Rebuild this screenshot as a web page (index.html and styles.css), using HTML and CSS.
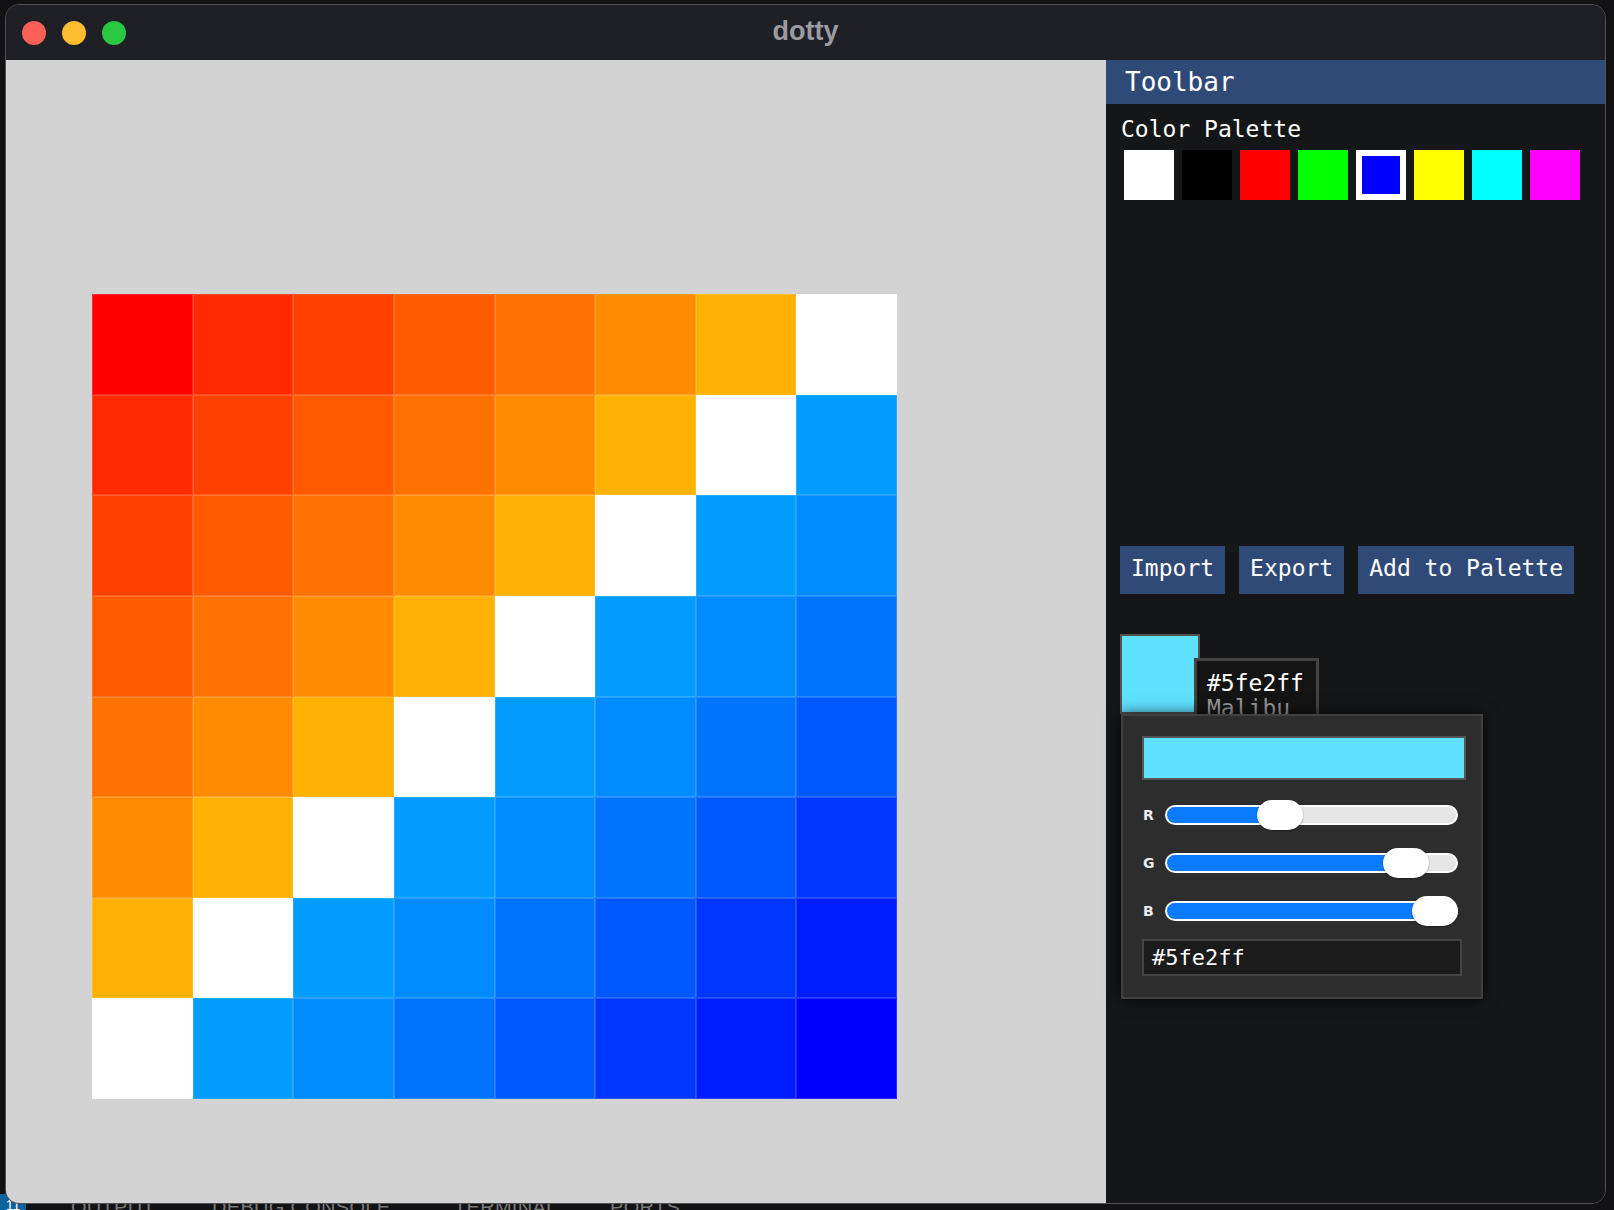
FILE: index.html
```html
<!DOCTYPE html>
<html lang="en">
<head>
<meta charset="utf-8">
<title>dotty</title>
<link rel="stylesheet" href="styles.css">
</head>
<body>
<div class="desktop">
  <div class="panel-tabs">
    <span class="badge">11</span>
    <span class="tab tab-output">OUTPUT</span>
    <span class="tab tab-debug">DEBUG CONSOLE</span>
    <span class="tab tab-term">TERMINAL</span>
    <span class="tab tab-ports">PORTS</span>
  </div>

  <div class="window">
    <div class="titlebar">
      <div class="lights">
        <span class="light red"></span>
        <span class="light yellow"></span>
        <span class="light green"></span>
      </div>
      <div class="title">dotty</div>
      <div></div>
    </div>

    <div class="main">
      <div class="canvas">
        <div class="grid">
          <div class="cell k0"></div><div class="cell k1"></div><div class="cell k2"></div><div class="cell k3"></div><div class="cell k4"></div><div class="cell k5"></div><div class="cell k6"></div><div class="cell k7"></div>
          <div class="cell k1"></div><div class="cell k2"></div><div class="cell k3"></div><div class="cell k4"></div><div class="cell k5"></div><div class="cell k6"></div><div class="cell k7"></div><div class="cell k8"></div>
          <div class="cell k2"></div><div class="cell k3"></div><div class="cell k4"></div><div class="cell k5"></div><div class="cell k6"></div><div class="cell k7"></div><div class="cell k8"></div><div class="cell k9"></div>
          <div class="cell k3"></div><div class="cell k4"></div><div class="cell k5"></div><div class="cell k6"></div><div class="cell k7"></div><div class="cell k8"></div><div class="cell k9"></div><div class="cell k10"></div>
          <div class="cell k4"></div><div class="cell k5"></div><div class="cell k6"></div><div class="cell k7"></div><div class="cell k8"></div><div class="cell k9"></div><div class="cell k10"></div><div class="cell k11"></div>
          <div class="cell k5"></div><div class="cell k6"></div><div class="cell k7"></div><div class="cell k8"></div><div class="cell k9"></div><div class="cell k10"></div><div class="cell k11"></div><div class="cell k12"></div>
          <div class="cell k6"></div><div class="cell k7"></div><div class="cell k8"></div><div class="cell k9"></div><div class="cell k10"></div><div class="cell k11"></div><div class="cell k12"></div><div class="cell k13"></div>
          <div class="cell k7"></div><div class="cell k8"></div><div class="cell k9"></div><div class="cell k10"></div><div class="cell k11"></div><div class="cell k12"></div><div class="cell k13"></div><div class="cell k14"></div>
        </div>
      </div>

      <div class="toolbar">
        <div class="tb-header">Toolbar</div>
        <div class="tb-body">
          <div class="label">Color Palette</div>
          <div class="palette">
            <span class="swatch sw-white"></span>
            <span class="swatch sw-black"></span>
            <span class="swatch sw-red"></span>
            <span class="swatch sw-green"></span>
            <span class="swatch sw-blue selected"></span>
            <span class="swatch sw-yellow"></span>
            <span class="swatch sw-cyan"></span>
            <span class="swatch sw-magenta"></span>
          </div>

          <div class="buttons">
            <button class="btn">Import</button>
            <button class="btn">Export</button>
            <button class="btn">Add to Palette</button>
          </div>

          <div class="color-btn"></div>

          <div class="tooltip">
            <div>#5fe2ff</div>
            <div class="muted">Malibu</div>
          </div>

          <div class="popup">
            <div class="preview"></div>

            <div class="slider-row">
              <span class="ch">R</span>
              <div class="slider">
                <div class="track"><div class="fill" style="width:113px"></div></div>
                <div class="thumb" style="left:92px"></div>
              </div>
            </div>
            <div class="slider-row">
              <span class="ch">G</span>
              <div class="slider">
                <div class="track"><div class="fill" style="width:239px"></div></div>
                <div class="thumb" style="left:218px"></div>
              </div>
            </div>
            <div class="slider-row">
              <span class="ch">B</span>
              <div class="slider">
                <div class="track"><div class="fill" style="width:268px"></div></div>
                <div class="thumb" style="left:247px"></div>
              </div>
            </div>

            <div class="hex-input">#5fe2ff</div>
          </div>
        </div>
      </div>
    </div>
  </div>
</div>
</body>
</html>
```

FILE: styles.css
```css
* {
  box-sizing: border-box;
}

html, body {
  margin: 0;
  padding: 0;
}

body {
  width: 1614px;
  height: 1210px;
  overflow: hidden;
  background: #121214;
  font-family: "DejaVu Sans Mono", "Liberation Mono", monospace;
}

.desktop {
  position: relative;
  width: 1614px;
  height: 1210px;
  padding: 4px 0 0 5px;
}

/* faint editor panel behind the window */
.panel-tabs {
  position: absolute;
  left: 0;
  top: 1192px;
  width: 1614px;
  height: 18px;
  font-family: "Liberation Sans", Arial, sans-serif;
  font-size: 20px;
  color: #7a7a7a;
}

.badge {
  position: absolute;
  left: 0;
  top: 2px;
  width: 26px;
  height: 20px;
  background: #0e639c;
  color: #fff;
  font-size: 14px;
  line-height: 22px;
  text-align: center;
  border-radius: 0 6px 0 0;
}

.tab {
  position: absolute;
  top: 4px;
  letter-spacing: 0.3px;
}
.tab-output { left: 71px; }
.tab-debug { left: 212px; }
.tab-term { left: 454px; }
.tab-ports { left: 610px; }

.window {
  position: relative;
  width: 1601px;
  height: 1200px;
  border: 1px solid #505056;
  border-radius: 14px;
  overflow: hidden;
  display: flex;
  flex-direction: column;
  background: #1f2026;
}

.titlebar {
  height: 55px;
  flex: 0 0 55px;
  background: #1f2026;
  display: grid;
  grid-template-columns: 1fr auto 1fr;
  align-items: center;
}

.lights {
  display: flex;
  gap: 16px;
  padding-left: 16px;
}

.light {
  width: 24px;
  height: 24px;
  border-radius: 50%;
  display: block;
}
.red { background: #fe5f57; }
.yellow { background: #febc2e; }
.green { background: #28c840; }

.title {
  font-family: "Liberation Sans", Arial, sans-serif;
  font-weight: bold;
  font-size: 27px;
  color: #9b9ba1;
  padding-bottom: 3px;
}

.main {
  flex: 1;
  display: flex;
  min-height: 0;
}

.canvas {
  flex: 0 0 1100px;
  background: #d3d3d3;
  padding: 234px 0 0 86px;
}

.grid {
  width: 805px;
  height: 805px;
  display: grid;
  grid-template-columns: repeat(8, 1fr);
  grid-template-rows: repeat(8, 1fr);
  filter: blur(0.6px);
}

.cell {
  box-shadow: inset 0 0 0 1px rgba(255, 255, 255, 0.16);
}

.k0 { background: #ff0000; }
.k1 { background: #ff2a00; }
.k2 { background: #ff4100; }
.k3 { background: #ff5a00; }
.k4 { background: #ff7100; }
.k5 { background: #ff8c00; }
.k6 { background: #ffb100; }
.k7 { background: #ffffff; }
.k8 { background: #009dff; }
.k9 { background: #008cff; }
.k10 { background: #0073ff; }
.k11 { background: #0058ff; }
.k12 { background: #0037ff; }
.k13 { background: #001dff; }
.k14 { background: #0000ff; }

.toolbar {
  flex: 1;
  background: #151618;
  display: flex;
  flex-direction: column;
  color: #ffffff;
}

.tb-header {
  height: 44px;
  flex: 0 0 44px;
  background: #304a78;
  font-size: 26px;
  line-height: 44px;
  padding-left: 19px;
  color: #ffffff;
}

.tb-body {
  position: relative;
  flex: 1;
  padding: 0 14px;
}

.label {
  margin-top: 12px;
  font-size: 23px;
  line-height: 27px;
  padding-left: 1px;
}

.palette {
  margin-top: 7px;
  padding-left: 4px;
  display: flex;
  gap: 8px;
}

.swatch {
  display: block;
  width: 50px;
  height: 50px;
}
.sw-white { background: #ffffff; }
.sw-black { background: #000000; }
.sw-red { background: #ff0000; }
.sw-green { background: #00ff00; }
.sw-blue { background: #0000ff; }
.sw-yellow { background: #ffff00; }
.sw-cyan { background: #00ffff; }
.sw-magenta { background: #ff00ff; }

.swatch.selected {
  border: 6px solid #ffffff;
}

.buttons {
  margin-top: 346px;
  display: flex;
  gap: 14px;
}

.btn {
  height: 48px;
  padding: 0 11px 4px;
  border: none;
  background: #304a78;
  color: #ffffff;
  font-family: "DejaVu Sans Mono", "Liberation Mono", monospace;
  font-size: 23px;
  line-height: 44px;
}

.color-btn {
  margin-top: 40px;
  width: 80px;
  height: 80px;
  border: 2px solid #525252;
  background: #5fe2ff;
}

.tooltip {
  position: absolute;
  left: 88px;
  top: 554px;
  width: 125px;
  height: 84px;
  border: 3px solid #434343;
  background: #141414;
  padding: 10px 10px;
  font-size: 23px;
  line-height: 25px;
  color: #ffffff;
}

.tooltip .muted {
  color: #9a9a9a;
}

.popup {
  position: absolute;
  left: 15px;
  top: 610px;
  width: 362px;
  height: 285px;
  border: 2px solid #404040;
  background: #2d2d2d;
  padding: 20px 15px 20px 19px;
  box-shadow: 0 0 14px rgba(0, 0, 0, 0.75);
}

.preview {
  width: 324px;
  height: 44px;
  border: 2px solid #555555;
  background: #5fe2ff;
}

.slider-row {
  display: flex;
  align-items: center;
  height: 30px;
  margin-top: 18px;
}

.preview + .slider-row {
  margin-top: 20px;
}

.ch {
  width: 23px;
  padding-left: 1px;
  font-family: "DejaVu Sans", "Liberation Sans", sans-serif;
  font-weight: 600;
  font-size: 14px;
  color: #eeeeee;
}

.slider {
  position: relative;
  width: 293px;
  height: 30px;
  display: flex;
  align-items: center;
}

.track {
  width: 100%;
  height: 20px;
  border: 2px solid #ffffff;
  border-radius: 10px;
  background: #e6e6e6;
  overflow: hidden;
}

.fill {
  height: 100%;
  background: #0a7aff;
}

.thumb {
  position: absolute;
  top: 0;
  width: 46px;
  height: 30px;
  border-radius: 15px;
  background: #ffffff;
  box-shadow: 0 1px 2px rgba(0, 0, 0, 0.35);
}

.hex-input {
  margin-top: 13px;
  width: 320px;
  height: 37px;
  border: 2px solid #454545;
  background: #1b1b1b;
  padding-left: 8px;
  font-family: "DejaVu Sans Mono", "Liberation Mono", monospace;
  font-size: 22px;
  line-height: 33px;
  color: #ffffff;
}
```
